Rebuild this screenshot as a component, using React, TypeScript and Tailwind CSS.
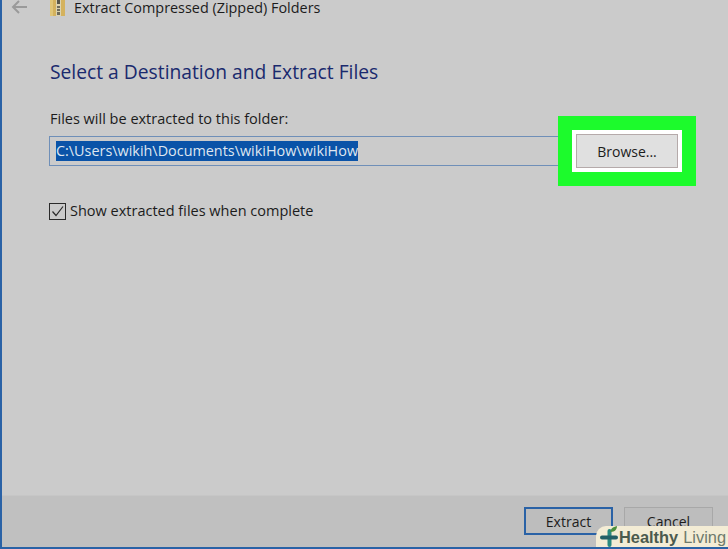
import React from 'react';

const font = "font-['Open_Sans','Noto_Sans',sans-serif]";

const ZipIcon = () => (
  <svg width="16" height="16" viewBox="0 0 16 16" className="shrink-0">
    <rect x="0" y="0" width="15" height="16" fill="#d4b25e" />
    <rect x="0" y="0" width="3" height="16" fill="#e0c678" />
    <rect x="6" y="0" width="5" height="16" fill="#dcd3b0" />
    <rect x="7" y="0" width="3" height="4" fill="#57564a" />
    <rect x="7" y="6" width="3" height="9" fill="#6f6c5c" />
    <rect x="7" y="8" width="3" height="1" fill="#d8cfa8" />
    <rect x="7" y="11" width="3" height="1" fill="#d8cfa8" />
  </svg>
);

const HealthyLivingBadge = () => (
  <div className="absolute right-0 -bottom-[2px] h-[23px] w-[132px] bg-[#f3ecd5] rounded-tl-[10px] flex items-center pl-[3px] font-['Liberation_Sans',sans-serif] text-[16.4px] leading-none">
    <svg width="20" height="26" viewBox="0 0 20 26" className="shrink-0 -mt-[5px]">
      <path d="M10.5 9v14" stroke="#2a8a80" strokeWidth="4" strokeLinecap="round" fill="none" />
      <path d="M3 15.5h14" stroke="#235f66" strokeWidth="4" strokeLinecap="round" fill="none" />
      <path d="M11.5 10c0-3 2-5 6.5-6 0 3-2 6-6.5 6z" fill="#4c8f3c" />
    </svg>
    <span className="font-bold text-[#4b5a4e]">Healthy</span>
    <span className="text-[#6e7a6c] ml-[5px]">Living</span>
  </div>
);

export default function App() {
  return (
    <div className={`relative w-[728px] h-[549px] overflow-hidden flex flex-col bg-[#cbcbcb] border-l-2 border-b-2 border-[#2a62a6] ${font}`}>
      <div className="h-[16px] flex items-center">
        <svg width="18" height="14" viewBox="0 0 18 14" className="ml-[9px] -mt-[3px]" fill="none" stroke="#9a9a9a" strokeWidth="2">
          <path d="M16 7H2M8 1L2 7l6 6" />
        </svg>
        <div className="ml-[21px] flex items-center">
          <ZipIcon />
        </div>
        <span className="ml-[8px] text-[14.4px] leading-none text-[#1c1c1c] whitespace-nowrap">Extract Compressed (Zipped) Folders</span>
      </div>

      <div className="flex-1 flex flex-col pl-[48px]">
        <h1 className="mt-[43px] text-[19.25px] leading-[26px] text-[#1a2a6e] whitespace-nowrap">Select a Destination and Extract Files</h1>

        <p className="mt-[24px] text-[14.5px] leading-[20px] text-[#1c1c1c]">Files will be extracted to this folder:</p>

        <div className="mt-[-13px] -ml-[1px] pr-[32px] flex items-center">
          <div className="flex-1 h-[30px] border-y border-l border-[#6f8fb8] flex items-center pl-[6px]">
            <span className="bg-[#0a53a8] text-[#dfe6f0] text-[14.4px] leading-[20px] whitespace-nowrap">C:\Users\wikih\Documents\wikiHow\wikiHow</span>
          </div>
          <div className="w-[138px] h-[70px] bg-[#1cfb2c] flex items-center justify-center">
            <div className="w-[110px] h-[42px] bg-white flex items-center justify-center">
              <button className="w-[102px] h-[34px] bg-[#e0e0e0] border border-[#b5aaaa] text-[14px] text-[#1c1c1c]">Browse...</button>
            </div>
          </div>
        </div>

        <label className="mt-[15px] -ml-[1px] flex items-center">
          <span className="w-[17px] h-[17px] border-[1.5px] border-[#2a2a2a] flex items-center justify-center">
            <svg width="13" height="13" viewBox="0 0 13 13" fill="none" stroke="#2a2a2a" strokeWidth="1.2">
              <path d="M1.5 6.5l3.5 4 7-9" />
            </svg>
          </span>
          <span className="ml-[4px] text-[14.5px] leading-[20px] text-[#1c1c1c]">Show extracted files when complete</span>
        </label>
      </div>

      <div className="h-[52px] bg-[#c0c0c0] border-t border-[#c6c6c6] flex justify-end items-start pt-[11px] pr-[15px] gap-[11px]">
        <button className="w-[89px] h-[28px] bg-[#bdbdbd] border-2 border-[#2a62a6] text-[14px] text-[#1c1c1c] pt-[1px]">Extract</button>
        <button className="w-[89px] h-[28px] bg-[#bdbdbd] border border-[#a8a8a8] text-[14px] text-[#1c1c1c] pt-[1px]">Cancel</button>
      </div>

      <HealthyLivingBadge />
    </div>
  );
}
